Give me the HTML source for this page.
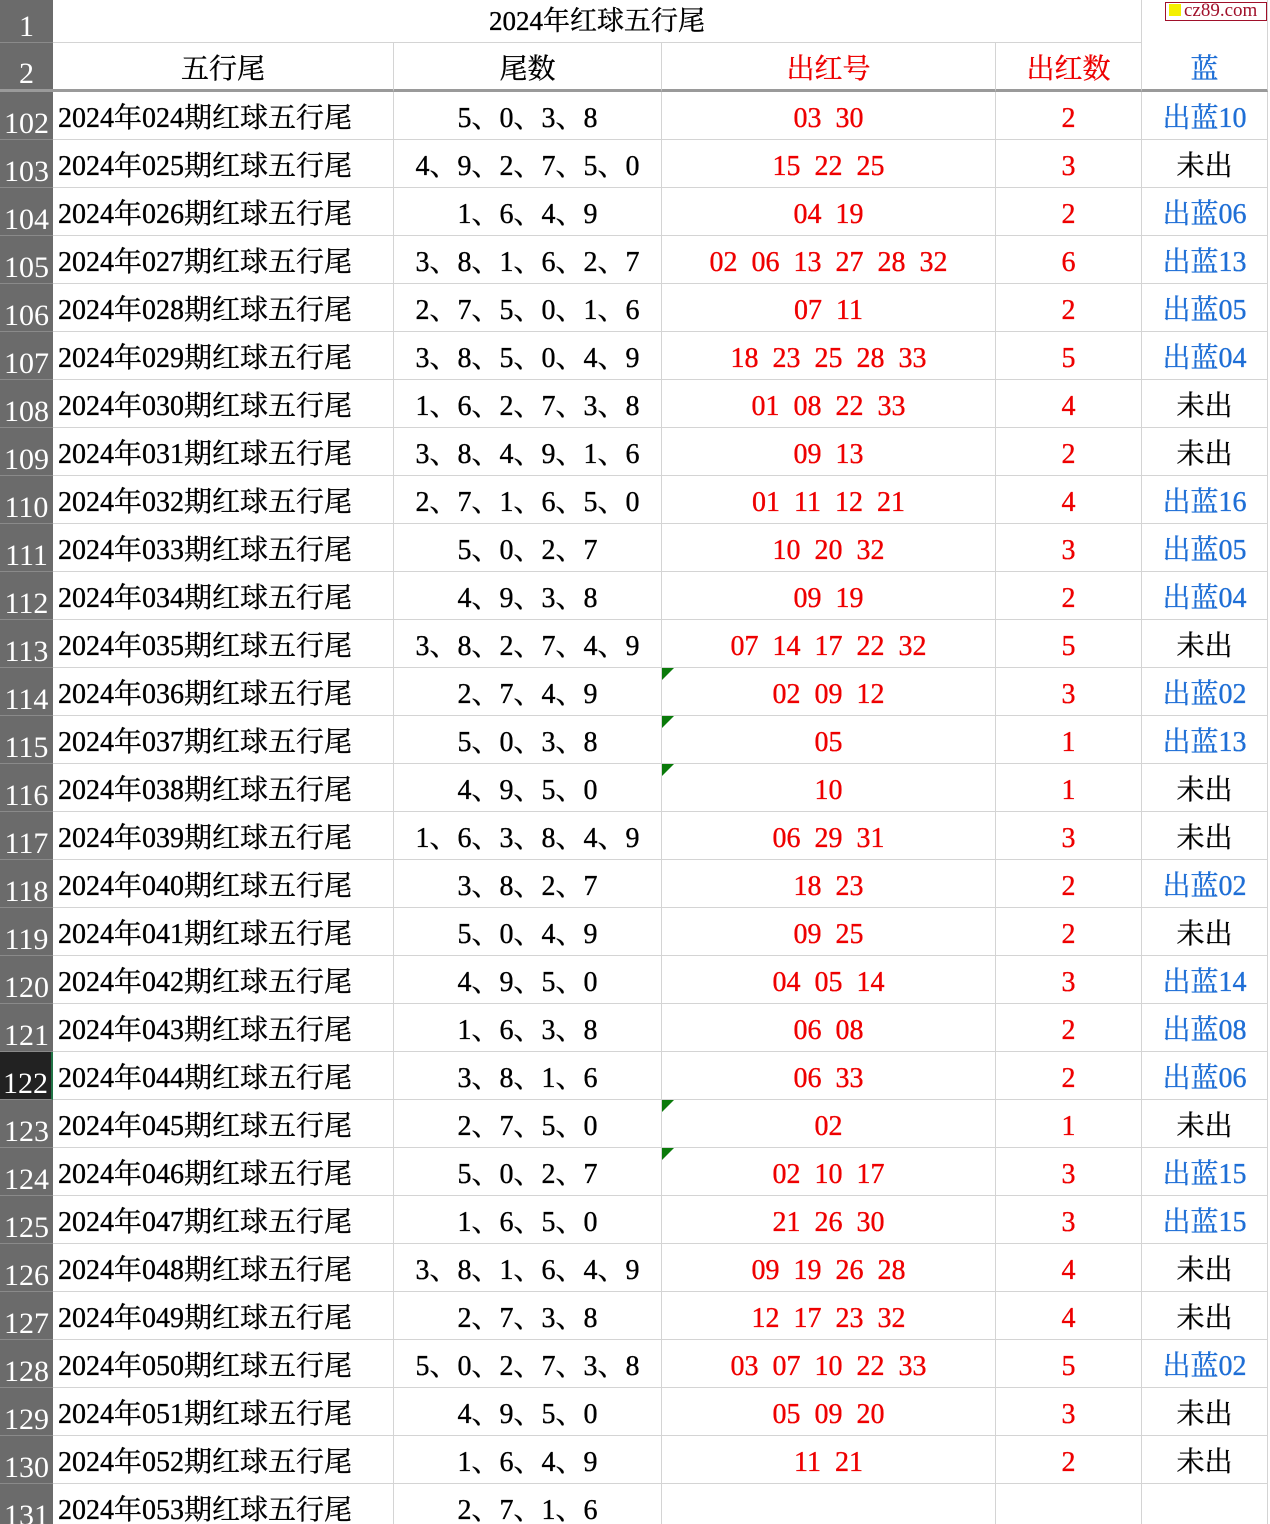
<!DOCTYPE html>
<html><head><meta charset="utf-8"><style>
html,body{margin:0;padding:0;background:#fff;width:1270px;height:1524px;overflow:hidden}
body{font-family:"Liberation Serif","Noto Serif CJK SC",serif;font-size:28px;color:#000;-webkit-text-stroke:0.35px}
.row{display:flex;height:48px;position:relative}
.row>div{box-sizing:border-box;height:100%;border-right:1px solid #d4d4d4;border-bottom:1px solid #d4d4d4;text-align:center;white-space:pre;overflow:hidden;padding-top:5px;line-height:44px;position:relative}
.row>div:nth-child(1){width:53px;background:#6b6b6b;color:#fff;font-size:30px;padding:0 0 0 0;line-height:30px;display:flex;align-items:flex-end;justify-content:center;border-color:#8a8a8a;border-right:none;-webkit-text-stroke:0}
.row>div:nth-child(2){width:341px;text-align:left;padding-left:5px}
.row>div:nth-child(3){width:268px}
.row>div:nth-child(4){width:334px}
.row>div:nth-child(5){width:146px}
.row>div:nth-child(6){width:126px}
.r{color:#ee0000}.b{color:#1f6fd6}
.t{position:absolute;left:0;top:0;width:0;height:0;border-top:12px solid #0a7a0a;border-right:12px solid transparent}
.hd>div{border-bottom:3px solid #9a9a9a !important}
.row>div.sel{background:#222;border-right:2px solid #217346}
</style></head><body>
<div class="row" style="height:43px"><div>1</div><div style="width:1089px;text-align:center;padding-top:0;line-height:42px;font-size:27px;padding-left:0">2024年红球五行尾</div><div style="width:126px;border-bottom:none"><div style="position:absolute;left:23px;top:2px;width:102px;height:19px;border:1px solid #a0102a;box-sizing:border-box;font-size:19px;line-height:16px;color:#a0102a;text-align:left;padding-left:3px;-webkit-text-stroke:0"><span style="display:inline-block;width:12px;height:12px;background:#f4f000;margin-right:3px"></span>cz89.com</div></div></div>
<div class="row hd" style="height:49px"><div>2</div><div style="text-align:center;padding-left:0">五行尾</div><div>尾数</div><div class="r">出红号</div><div class="r">出红数</div><div class="b">蓝</div></div>
<div class="row"><div>102</div><div>2024年024期红球五行尾</div><div>5、0、3、8</div><div class="r">03  30</div><div class="r">2</div><div class="b">出蓝10</div></div>
<div class="row"><div>103</div><div>2024年025期红球五行尾</div><div>4、9、2、7、5、0</div><div class="r">15  22  25</div><div class="r">3</div><div>未出</div></div>
<div class="row"><div>104</div><div>2024年026期红球五行尾</div><div>1、6、4、9</div><div class="r">04  19</div><div class="r">2</div><div class="b">出蓝06</div></div>
<div class="row"><div>105</div><div>2024年027期红球五行尾</div><div>3、8、1、6、2、7</div><div class="r">02  06  13  27  28  32</div><div class="r">6</div><div class="b">出蓝13</div></div>
<div class="row"><div>106</div><div>2024年028期红球五行尾</div><div>2、7、5、0、1、6</div><div class="r">07  11</div><div class="r">2</div><div class="b">出蓝05</div></div>
<div class="row"><div>107</div><div>2024年029期红球五行尾</div><div>3、8、5、0、4、9</div><div class="r">18  23  25  28  33</div><div class="r">5</div><div class="b">出蓝04</div></div>
<div class="row"><div>108</div><div>2024年030期红球五行尾</div><div>1、6、2、7、3、8</div><div class="r">01  08  22  33</div><div class="r">4</div><div>未出</div></div>
<div class="row"><div>109</div><div>2024年031期红球五行尾</div><div>3、8、4、9、1、6</div><div class="r">09  13</div><div class="r">2</div><div>未出</div></div>
<div class="row"><div>110</div><div>2024年032期红球五行尾</div><div>2、7、1、6、5、0</div><div class="r">01  11  12  21</div><div class="r">4</div><div class="b">出蓝16</div></div>
<div class="row"><div>111</div><div>2024年033期红球五行尾</div><div>5、0、2、7</div><div class="r">10  20  32</div><div class="r">3</div><div class="b">出蓝05</div></div>
<div class="row"><div>112</div><div>2024年034期红球五行尾</div><div>4、9、3、8</div><div class="r">09  19</div><div class="r">2</div><div class="b">出蓝04</div></div>
<div class="row"><div>113</div><div>2024年035期红球五行尾</div><div>3、8、2、7、4、9</div><div class="r">07  14  17  22  32</div><div class="r">5</div><div>未出</div></div>
<div class="row"><div>114</div><div>2024年036期红球五行尾</div><div>2、7、4、9</div><div class="r"><i class="t"></i>02  09  12</div><div class="r">3</div><div class="b">出蓝02</div></div>
<div class="row"><div>115</div><div>2024年037期红球五行尾</div><div>5、0、3、8</div><div class="r"><i class="t"></i>05</div><div class="r">1</div><div class="b">出蓝13</div></div>
<div class="row"><div>116</div><div>2024年038期红球五行尾</div><div>4、9、5、0</div><div class="r"><i class="t"></i>10</div><div class="r">1</div><div>未出</div></div>
<div class="row"><div>117</div><div>2024年039期红球五行尾</div><div>1、6、3、8、4、9</div><div class="r">06  29  31</div><div class="r">3</div><div>未出</div></div>
<div class="row"><div>118</div><div>2024年040期红球五行尾</div><div>3、8、2、7</div><div class="r">18  23</div><div class="r">2</div><div class="b">出蓝02</div></div>
<div class="row"><div>119</div><div>2024年041期红球五行尾</div><div>5、0、4、9</div><div class="r">09  25</div><div class="r">2</div><div>未出</div></div>
<div class="row"><div>120</div><div>2024年042期红球五行尾</div><div>4、9、5、0</div><div class="r">04  05  14</div><div class="r">3</div><div class="b">出蓝14</div></div>
<div class="row"><div>121</div><div>2024年043期红球五行尾</div><div>1、6、3、8</div><div class="r">06  08</div><div class="r">2</div><div class="b">出蓝08</div></div>
<div class="row"><div class="sel">122</div><div>2024年044期红球五行尾</div><div>3、8、1、6</div><div class="r">06  33</div><div class="r">2</div><div class="b">出蓝06</div></div>
<div class="row"><div>123</div><div>2024年045期红球五行尾</div><div>2、7、5、0</div><div class="r"><i class="t"></i>02</div><div class="r">1</div><div>未出</div></div>
<div class="row"><div>124</div><div>2024年046期红球五行尾</div><div>5、0、2、7</div><div class="r"><i class="t"></i>02  10  17</div><div class="r">3</div><div class="b">出蓝15</div></div>
<div class="row"><div>125</div><div>2024年047期红球五行尾</div><div>1、6、5、0</div><div class="r">21  26  30</div><div class="r">3</div><div class="b">出蓝15</div></div>
<div class="row"><div>126</div><div>2024年048期红球五行尾</div><div>3、8、1、6、4、9</div><div class="r">09  19  26  28</div><div class="r">4</div><div>未出</div></div>
<div class="row"><div>127</div><div>2024年049期红球五行尾</div><div>2、7、3、8</div><div class="r">12  17  23  32</div><div class="r">4</div><div>未出</div></div>
<div class="row"><div>128</div><div>2024年050期红球五行尾</div><div>5、0、2、7、3、8</div><div class="r">03  07  10  22  33</div><div class="r">5</div><div class="b">出蓝02</div></div>
<div class="row"><div>129</div><div>2024年051期红球五行尾</div><div>4、9、5、0</div><div class="r">05  09  20</div><div class="r">3</div><div>未出</div></div>
<div class="row"><div>130</div><div>2024年052期红球五行尾</div><div>1、6、4、9</div><div class="r">11  21</div><div class="r">2</div><div>未出</div></div>
<div class="row"><div>131</div><div>2024年053期红球五行尾</div><div>2、7、1、6</div><div></div><div></div><div></div></div>
</body></html>
